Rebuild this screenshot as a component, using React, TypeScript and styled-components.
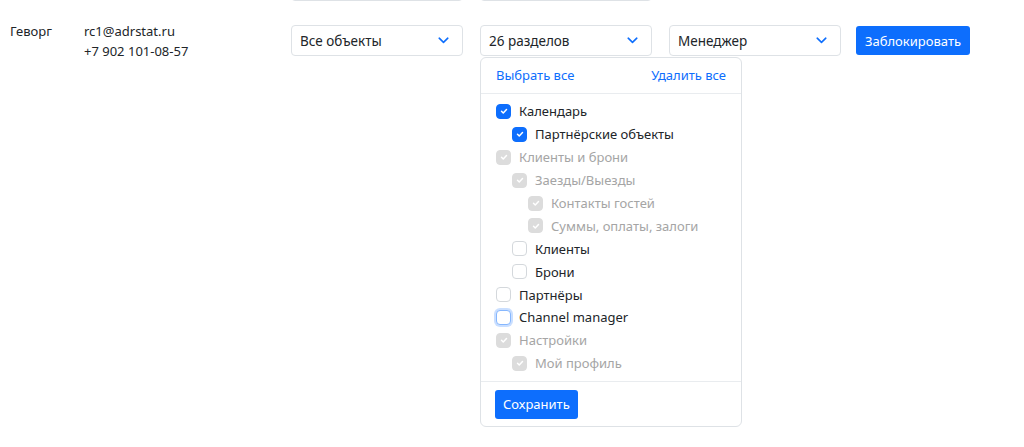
import React from 'react';
import styled, { createGlobalStyle, css } from 'styled-components';

const GlobalStyle = createGlobalStyle`
  html, body {
    margin: 0;
    padding: 0;
    background: #fff;
  }
  body {
    font-family: 'Noto Sans', 'Open Sans', sans-serif;
    font-size: 13px;
    color: #212529;
  }
`;

const Page = styled.div`
  padding-left: 10px;
  margin-top: -34px;
  height: 481px;
  overflow: hidden;
`;

const Row = styled.div`
  display: flex;
  align-items: flex-start;
  min-height: 55px;
`;

const NameCell = styled.div`
  width: 74px;
  line-height: 20px;
`;

const ContactCell = styled.div`
  width: 207px;
  line-height: 20px;
`;

const Controls = styled.div`
  display: flex;
  align-items: flex-start;
  gap: 17px;
  padding-top: 4px;
`;

const SelectWrap = styled.div`
  position: relative;
`;

const SelectBox = styled.div<{ $w?: number }>`
  box-sizing: border-box;
  width: ${(p) => p.$w ?? 172}px;
  height: 31px;
  border: 1px solid #dee2e6;
  border-radius: 4px;
  display: flex;
  align-items: center;
  justify-content: space-between;
  padding: 0 13px 0 8px;
  font-size: 13.5px;
  background: #fff;
`;

const Chevron = () => (
  <svg width="11" height="7" viewBox="0 0 11 7" fill="none">
    <path d="M1.2 1.2 5.5 5.3l4.3-4.1" stroke="#0d6efd" strokeWidth="1.6" strokeLinecap="round" strokeLinejoin="round" />
  </svg>
);

const Button = styled.button`
  font-family: inherit;
  font-size: 13px;
  color: #fff;
  background: #0d6efd;
  border: none;
  border-radius: 3px;
  height: 29px;
  padding: 0 8px;
  cursor: pointer;
`;

const BlockButton = styled(Button)`
  margin-left: -2px;
  margin-top: 1px;
  padding: 0 9px;
`;

const Dropdown = styled.div`
  position: absolute;
  top: 32px;
  left: 0;
  box-sizing: border-box;
  width: 262px;
  height: 370px;
  border: 1px solid #dee2e6;
  border-radius: 6px;
  background: #fff;
  display: flex;
  flex-direction: column;
  z-index: 2;
`;

const DropHeader = styled.div`
  display: flex;
  justify-content: space-between;
  padding: 7px 15px 8px 15px;
  line-height: 20px;
  border-bottom: 1px solid #e9ecef;
`;

const LinkText = styled.span`
  color: #0d6efd;
  font-size: 13px;
`;

const List = styled.div`
  padding: 6px 15px 6px;
  display: flex;
  flex-direction: column;
`;

const Item = styled.div<{ $level: number; $disabled?: boolean }>`
  display: flex;
  align-items: center;
  gap: 9px;
  height: 22.9px;
  padding-left: ${(p) => p.$level * 16}px;
  color: ${(p) => (p.$disabled ? '#a5a5a5' : '#212529')};
  font-size: 13px;
`;

const Box = styled.span<{ $checked?: boolean; $disabled?: boolean; $focus?: boolean }>`
  box-sizing: border-box;
  width: 15px;
  height: 15px;
  border-radius: 4px;
  border: 1px solid #d4d8dc;
  background: #fff;
  display: inline-flex;
  align-items: center;
  justify-content: center;
  flex-shrink: 0;
  margin-right: -1px;
  ${(p) =>
    p.$checked &&
    css`
      background: #0d6efd;
      border-color: #0d6efd;
    `}
  ${(p) =>
    p.$checked &&
    p.$disabled &&
    css`
      background: #dcdcdc;
      border-color: #dcdcdc;
    `}
  ${(p) =>
    p.$focus &&
    css`
      border-color: #86b7fe;
      box-shadow: 0 0 0 2px rgba(13, 110, 253, 0.22);
    `}
`;

const Footer = styled.div`
  border-top: 1px solid #e9ecef;
  padding: 8px 14px 9px;
  margin-top: auto;
`;

type Node = { label: string; level: number; checked?: boolean; disabled?: boolean; focus?: boolean };

const sections: Node[] = [
  { label: 'Календарь', level: 0, checked: true },
  { label: 'Партнёрские объекты', level: 1, checked: true },
  { label: 'Клиенты и брони', level: 0, checked: true, disabled: true },
  { label: 'Заезды/Выезды', level: 1, checked: true, disabled: true },
  { label: 'Контакты гостей', level: 2, checked: true, disabled: true },
  { label: 'Суммы, оплаты, залоги', level: 2, checked: true, disabled: true },
  { label: 'Клиенты', level: 1 },
  { label: 'Брони', level: 1 },
  { label: 'Партнёры', level: 0 },
  { label: 'Channel manager', level: 0, focus: true },
  { label: 'Настройки', level: 0, checked: true, disabled: true },
  { label: 'Мой профиль', level: 1, checked: true, disabled: true },
];

const Check = () => (
  <svg width="10" height="10" viewBox="0 0 20 20" fill="none">
    <path d="m5 10.5 3.5 3.5 6.5-7" stroke="#fff" strokeWidth="3" strokeLinecap="round" strokeLinejoin="round" />
  </svg>
);

const App: React.FC = () => {
  return (
    <>
      <GlobalStyle />
      <Page>
        <Row>
          <NameCell />
          <ContactCell />
          <Controls>
            <SelectBox />
            <SelectBox />
          </Controls>
        </Row>
        <Row>
          <NameCell>Геворг</NameCell>
          <ContactCell>
            rc1@adrstat.ru
            <br />
            +7 902 101-08-57
          </ContactCell>
          <Controls>
            <SelectBox>
              Все объекты <Chevron />
            </SelectBox>
            <SelectWrap>
              <SelectBox>
                26 разделов <Chevron />
              </SelectBox>
              <Dropdown>
                <DropHeader>
                  <LinkText>Выбрать все</LinkText>
                  <LinkText>Удалить все</LinkText>
                </DropHeader>
                <List>
                  {sections.map((s) => (
                    <Item key={s.label} $level={s.level} $disabled={s.disabled}>
                      <Box $checked={s.checked} $disabled={s.disabled} $focus={s.focus}>
                        {s.checked && <Check />}
                      </Box>
                      {s.label}
                    </Item>
                  ))}
                </List>
                <Footer>
                  <Button>Сохранить</Button>
                </Footer>
              </Dropdown>
            </SelectWrap>
            <SelectBox>
              Менеджер <Chevron />
            </SelectBox>
            <BlockButton>Заблокировать</BlockButton>
          </Controls>
        </Row>
      </Page>
    </>
  );
};

export default App;
